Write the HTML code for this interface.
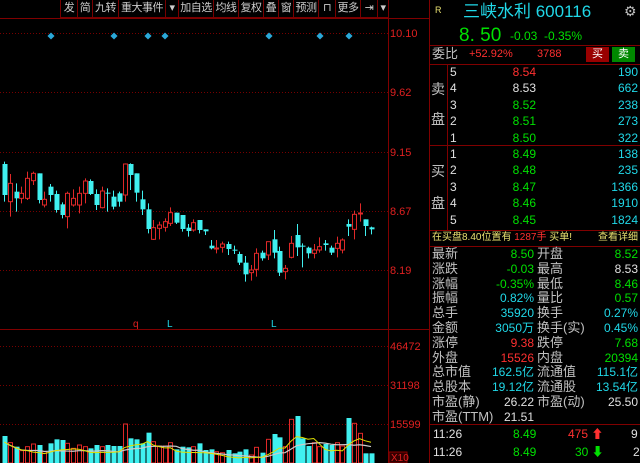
<!DOCTYPE html><html><head><meta charset="utf-8"><style>
body{margin:0;width:640px;height:463px;background:#000;overflow:hidden;position:relative;font-family:"Liberation Sans","Noto Sans CJK SC",sans-serif;}
.t{position:absolute;white-space:nowrap;line-height:1;}
.r{text-align:right}
.g{color:#00e000}.rd{color:#ff3030}.c{color:#20d8e8}.w{color:#e0e0e0}.gy{color:#c0c0c0}.y{color:#e8e070}
.hl{position:absolute;left:430px;width:210px;height:1px;background:#800000}
.tb{position:absolute;top:0;height:17px;border:1px solid #700;border-top:0;color:#ccc;font-size:11px;line-height:17px;text-align:center;background:#000;white-space:nowrap;overflow:hidden;letter-spacing:-0.5px}
</style></head><body>
<svg id="s" width="640" height="463" style="position:absolute;left:0;top:0"></svg>
<div class="tb" style="left:60px;width:16px">发</div>
<div class="tb" style="left:77px;width:14px">简</div>
<div class="tb" style="left:92px;width:25px">九转</div>
<div class="tb" style="left:118px;width:46px">重大事件</div>
<div class="tb" style="left:165px;width:12px">▾</div>
<div class="tb" style="left:178px;width:34px">加自选</div>
<div class="tb" style="left:213px;width:24px">均线</div>
<div class="tb" style="left:238px;width:24px">复权</div>
<div class="tb" style="left:263px;width:14px">叠</div>
<div class="tb" style="left:278px;width:14px">窗</div>
<div class="tb" style="left:293px;width:24px">预测</div>
<div class="tb" style="left:318px;width:16px">⊓</div>
<div class="tb" style="left:335px;width:24px">更多</div>
<div class="tb" style="left:360px;width:16px">⇥</div>
<div class="tb" style="left:377px;width:10px">▾</div>
<div class="t y" style="left:435px;top:6px;font-size:9px">R</div>
<div class="t c" style="left:463px;top:3px;font-size:17px">三峡水利 600116</div>
<div class="t gy" style="left:624px;top:4px;font-size:14px">⚙</div>
<div class="t g" style="left:459px;top:26px;font-size:19px">8. 50</div>
<div class="t g" style="left:510px;top:30px;font-size:12px">-0.03</div>
<div class="t g" style="left:544px;top:30px;font-size:12px">-0.35%</div>
<div class="hl" style="top:45px"></div>
<div class="t gy" style="left:432px;top:47px;font-size:13px">委比</div>
<div class="t rd" style="left:469px;top:49px;font-size:11px">+52.92%</div>
<div class="t rd" style="left:537px;top:49px;font-size:11px">3788</div>
<div class="t" style="left:586px;top:47px;width:23px;height:15px;background:#900;color:#fff;font-size:11px;text-align:center;line-height:15px">买</div>
<div class="t" style="left:612px;top:47px;width:23px;height:15px;background:#080;color:#fff;font-size:11px;text-align:center;line-height:15px">卖</div>
<div class="hl" style="top:64px"></div>
<div style="position:absolute;left:447px;top:64px;width:1px;height:166px;background:#800000"></div>
<div class="t gy" style="left:431px;top:82px;font-size:14px">卖</div>
<div class="t gy" style="left:431px;top:112px;font-size:14px">盘</div>
<div class="t gy" style="left:431px;top:164px;font-size:14px">买</div>
<div class="t gy" style="left:431px;top:196px;font-size:14px">盘</div>
<div id="ob"></div>
<div class="hl" style="top:145px"></div>
<div class="hl" style="top:230px"></div>
<div class="t y" style="left:432px;top:233px;font-size:10px">在买盘8.40位置有 <span class="rd">1287手</span> 买单!</div>
<div class="t y" style="left:598px;top:233px;font-size:10px">查看详细</div>
<div class="hl" style="top:246px"></div>
<div id="st"></div>
<div class="hl" style="top:424px"></div>
<div class="t w" style="left:433px;top:428px;font-size:12px">11:26</div>
<div class="t g" style="left:513px;top:428px;font-size:12px">8.49</div>
<div class="t rd" style="left:568px;top:428px;font-size:12px">475 <span>⬆</span></div>
<div class="t w" style="left:631px;top:428px;font-size:12px">9</div>
<div class="t w" style="left:433px;top:446px;font-size:12px">11:26</div>
<div class="t g" style="left:513px;top:446px;font-size:12px">8.49</div>
<div class="t g" style="left:575px;top:446px;font-size:12px">30 ⬇</div>
<div class="t w" style="left:633px;top:446px;font-size:12px">2</div>
<script>
var S='';
function L(x1,y1,x2,y2,c,d){S+='<line x1="'+x1+'" y1="'+y1+'" x2="'+x2+'" y2="'+y2+'" stroke="'+c+'" stroke-width="1"'+(d?' stroke-dasharray="1,2"':'')+'/>';}
function T(x,y,t,c,fs){S+='<text x="'+x+'" y="'+y+'" fill="'+c+'" font-size="'+(fs||11)+'" font-family="Liberation Sans">'+t+'</text>';}
L(0,18.5,430,18.5,'#800000');
L(388.5,18,388.5,463,'#800000');L(429.5,0,429.5,463,'#800000');
[33,92,152,211,270].forEach(function(y,i){L(0,y+.5,388,y+.5,'#700',1);T(390,y+4,['10.10','9.62','9.15','8.67','8.19'][i],'#e02020');});
L(0,329.5,430,329.5,'#800000');
[346,385,424].forEach(function(y,i){L(0,y+.5,388,y+.5,'#700',1);T(390,y+4,['46472','31198','15599'][i],'#e02020');});
S+='<rect x="389" y="452" width="18" height="11" fill="#300" stroke="#800"/>';T(391,461,'X10','#e02020',10);
[51,114,148,165,269,320,349].forEach(function(x){S+='<rect x="'+(x-2.5)+'" y="33.5" width="5" height="5" fill="#2aa8d8" transform="rotate(45 '+x+' 36)"/>';});
T(133,327,'q','#e02020',10);T(167,327,'L','#20d8e8',10);T(271,327,'L','#20d8e8',10);
var C=[['c',42,135,35,155],['r',100,155,72,200],['c',125,145,100,185],['r',130,145,110,160],['r',85,145,65,150],['r',70,92,65,105],['c',70,150,70,160],['r',148,165,125,172],['c',110,135,102,155],['c',132,180,122,188],['c',163,195,157,205],['r',130,200,125,235],['r',145,165,118,170],['r',130,165,110,190],['r',93,130,85,160],['c',93,132,88,135],['c',132,165,118,180],['r',123,173,110,175],['c',128,130,115,185],['c',140,170,122,178],['c',130,155,125,170],['r',42,135,40,155],['c',42,75,40,120],['c',70,128,70,155],['c',148,178,122,195],['c',178,237,160,250],['r',233,268,210,270],['r',225,235,215,268],['r',215,232,205,245],['r',188,220,172,228],['c',188,218,188,222],['c',195,237,195,245],['c',233,243,222,260],['r',218,240,208,245],['c',210,240,210,250],['c',238,244,238,255],['c',287,295,270,298],['r',294,296,270,310],['r',282,292,275,308],['c',282,297,275,315],['c',299,301,287,312],['c',312,338,305,345],['c',338,373,318,395],['r',360,368,345,392],['r',310,358,295,380],['c',308,325,302,332],['r',275,315,275,330],['c',268,308,240,325],['c',303,368,290,378],['r',355,365,345,388],['r',280,322,258,325],['c',255,292,222,318],['c',287,290,280,352],['c',293,310,290,325],['r',300,310,282,325],['r',290,300,262,308],['c',280,285,270,302],['c',293,308,287,315],['r',280,295,260,322],['r',270,300,265,310],['c',222,230,208,258],['r',193,238,182,268],['r',189,191,160,215],['c',208,228,208,258],['c',232,238,230,253]];
var V=[408,428,440,452,440,432,435,455,430,418,420,430,445,435,440,445,435,440,435,438,438,372,415,418,430,398,425,438,438,428,448,440,442,440,430,450,448,455,458,450,460,455,448,465,442,458,418,402,412,440,358,348,415,438,428,440,432,435,428,438,354,370,400,460,460];
C.forEach(function(k,i){var x=Math.round(4.3+i*5.73)+.5;var col=k[0]=='c'?'#40f0f0':'#e02828';
var b1=150+k[1]/3,b2=150+k[2]/3,h=150+k[3]/3,l=150+k[4]/3;
L(x,h,x,l,col);
if(k[0]=='c')S+='<rect x="'+(x-2)+'" y="'+b1+'" width="5" height="'+Math.max(1,b2-b1)+'" fill="'+col+'"/>';
else S+='<rect x="'+(x-2)+'" y="'+b1+'" width="4" height="'+Math.max(1,b2-b1)+'" fill="#000" stroke="'+col+'"/>';
var vt=300+(V[i]||450)/3;
if(k[0]=='c')S+='<rect x="'+(x-2)+'" y="'+vt+'" width="5" height="'+(463-vt)+'" fill="'+col+'"/>';
else S+='<rect x="'+(x-2)+'" y="'+vt+'" width="4" height="'+(463-vt)+'" fill="none" stroke="'+col+'"/>';
});
var p1=[],p2=[];
for(var i=0;i<C.length;i++){var s=0,n=0;for(var j=Math.max(0,i-4);j<=i;j++){s+=V[j];n++;}var x=4.3+i*5.73;p1.push(x+','+(300+s/n/3+6));
s=0;n=0;for(var j=Math.max(0,i-9);j<=i;j++){s+=V[j];n++;}p2.push(x+','+(300+s/n/3+6));}
S+='<polyline points="'+p2.join(' ')+'" fill="none" stroke="#ccc" stroke-width="1.2"/>';
S+='<polyline points="'+p1.join(' ')+'" fill="none" stroke="#e0e000" stroke-width="1"/>';
document.getElementById('s').innerHTML=S;
var ob='',rows=[['5','8.54','rd','190'],['4','8.53','w','662'],['3','8.52','g','238'],['2','8.51','g','273'],['1','8.50','g','322'],['1','8.49','g','138'],['2','8.48','g','235'],['3','8.47','g','1366'],['4','8.46','g','1910'],['5','8.45','g','1824']];
rows.forEach(function(r,i){var y=(i<5?66+i*16.4:148+(i-5)*16.4);
ob+='<div class="t w" style="left:450px;top:'+y+'px;font-size:12px">'+r[0]+'</div><div class="t r '+r[2]+'" style="left:480px;width:56px;top:'+y+'px;font-size:12px">'+r[1]+'</div><div class="t r c" style="left:580px;width:58px;top:'+y+'px;font-size:12px">'+r[3]+'</div>';});
document.getElementById('ob').innerHTML=ob;
var st=[['最新','8.50','g','开盘','8.52','g'],['涨跌','-0.03','g','最高','8.53','w'],['涨幅','-0.35%','g','最低','8.46','g'],['振幅','0.82%','c','量比','0.57','g'],['总手','35920','c','换手','0.27%','c'],['金额','3050万','c','换手(实)','0.45%','c'],['涨停','9.38','rd','跌停','7.68','g'],['外盘','15526','rd','内盘','20394','g'],['总市值','162.5亿','c','流通值','115.1亿','c'],['总股本','19.12亿','c','流通股','13.54亿','c'],['市盈(静)','26.22','w','市盈(动)','25.50','w'],['市盈(TTM)','21.51','w','','','']];
var h='';st.forEach(function(r,i){var y=247+i*14.8;
h+='<div class="t gy" style="left:432px;top:'+y+'px;font-size:13px">'+r[0]+'</div><div class="t r '+r[2]+'" style="left:470px;width:64px;top:'+(y+1)+'px;font-size:12px">'+r[1]+'</div><div class="t gy" style="left:537px;top:'+y+'px;font-size:13px">'+r[3]+'</div><div class="t r '+r[5]+'" style="left:580px;width:58px;top:'+(y+1)+'px;font-size:12px">'+r[4]+'</div>';});
document.getElementById('st').innerHTML=h;
</script>
</body></html>
